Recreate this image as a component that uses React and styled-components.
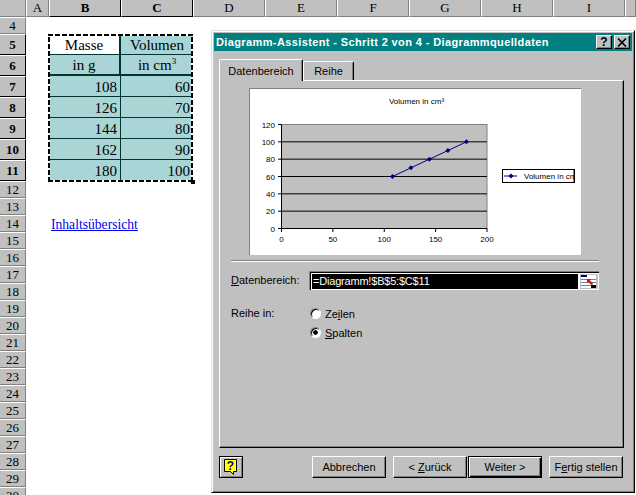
import React from 'react';
import styled, { createGlobalStyle } from 'styled-components';

const GlobalStyle = createGlobalStyle`
  html, body {
    margin: 0;
    padding: 0;
    background: #fff;
  }
  #root {
    width: 636px;
    height: 495px;
    overflow: hidden;
  }
`;

const Desktop = styled.div`
  position: relative;
  width: 636px;
  height: 495px;
  overflow: hidden;
  background: #fff;
`;

/* ---------- spreadsheet ---------- */

const Sheet = styled.div`
  display: grid;
  grid-template-columns: 26px 23px 72px 72px 72px 72px 72px 72px 72px 72px 11px;
  grid-template-rows: 17px 17px repeat(7, 21px) repeat(19, 17px);
  font-family: "Liberation Serif", "Times New Roman", serif;
  color: #000;
`;

const Corner = styled.div`
  grid-column: 1;
  grid-row: 1;
  background: #c0c0c0;
  border-right: 1px solid #808080;
  border-bottom: 1px solid #808080;
`;

const ColHeader = styled.div`
  grid-row: 1;
  grid-column: ${(p) => p.$col};
  display: flex;
  align-items: center;
  justify-content: center;
  box-sizing: border-box;
  background: #c0c0c0;
  font-size: 13px;
  font-weight: ${(p) => (p.$active ? 700 : 400)};
  border-left: 1px solid #fff;
  border-right: 1px solid ${(p) => (p.$active ? '#000' : '#808080')};
  border-bottom: 1px solid ${(p) => (p.$active ? '#000' : '#808080')};
`;

const RowHeader = styled.div`
  grid-column: 1;
  grid-row: ${(p) => p.$row};
  display: flex;
  align-items: center;
  justify-content: center;
  box-sizing: border-box;
  background: #c0c0c0;
  font-size: 13px;
  font-weight: ${(p) => (p.$active ? 700 : 400)};
  border-top: 1px solid #fff;
  border-right: 1px solid ${(p) => (p.$active ? '#000' : '#808080')};
  border-bottom: 1px solid ${(p) => (p.$active ? '#000' : '#808080')};
`;

const Cell = styled.div`
  grid-column: ${(p) => p.$col};
  grid-row: ${(p) => p.$row};
  display: flex;
  align-items: center;
  justify-content: ${(p) => (p.$center ? 'center' : 'flex-end')};
  box-sizing: border-box;
  padding: 2px ${(p) => (p.$center ? 0 : 3)}px 0 0;
  font-size: 15px;
  background-color: ${(p) => (p.$plain ? '#fff' : '#a8d4d4')};
  background-image: ${(p) =>
    p.$plain
      ? 'none'
      : 'conic-gradient(#a3d0d0 25%, #b0dada 0 50%, #a3d0d0 0 75%, #b0dada 0)'};
  background-size: 2px 2px;
  border-bottom: ${(p) => (p.$thick ? 2 : 1)}px solid #003333;
  border-right: ${(p) => (p.$col === 3 ? (p.$headRow ? 2 : 1) : 0)}px solid #003333;
`;

const Marquee = styled.div`
  grid-column: 3 / 5;
  grid-row: 3 / 10;
  position: relative;
  margin: 0 0 -1px -1px;
  pointer-events: none;
  background:
    repeating-linear-gradient(90deg, #000 0 5px, #fff 5px 7px) top / 100% 2px no-repeat,
    repeating-linear-gradient(90deg, #000 0 5px, #fff 5px 7px) bottom / 100% 2px no-repeat,
    repeating-linear-gradient(0deg, #000 0 5px, #fff 5px 7px) left / 2px 100% no-repeat,
    repeating-linear-gradient(0deg, #000 0 5px, #fff 5px 7px) right / 2px 100% no-repeat;
`;

const FillHandle = styled.span`
  position: absolute;
  right: -2px;
  bottom: -2px;
  width: 4px;
  height: 4px;
  background: #000;
`;

const SheetLink = styled.a`
  grid-column: 3 / 5;
  grid-row: 12;
  padding-left: 2px;
  font-size: 13.6px;
  line-height: 19px;
  white-space: nowrap;
  color: #0000ee;
  text-decoration: underline;
`;

/* ---------- dialog ---------- */

const Dialog = styled.div`
  position: absolute;
  left: 211px;
  top: 30px;
  width: 424px;
  height: 463px;
  box-sizing: border-box;
  padding: 1px;
  background: #c0c0c0;
  border-top: 1px solid #dfdfdf;
  border-left: 1px solid #dfdfdf;
  border-right: 1px solid #000;
  border-bottom: 1px solid #000;
  box-shadow: inset 1px 1px 0 #fff, inset -1px -1px 0 #808080;
  font-family: "Liberation Sans", Arial, sans-serif;
  font-size: 11px;
  color: #000;
`;

const TitleBar = styled.div`
  display: flex;
  align-items: center;
  height: 18px;
  margin: 1px 1px 0 1px;
  padding-left: 2px;
  background: #008080;
  color: #fff;
  font-size: 11px;
  font-weight: 700;
  letter-spacing: 0.38px;
`;

const TitleText = styled.span`
  flex: 1;
  white-space: nowrap;
`;

const CaptionButton = styled.button`
  width: 16px;
  height: 14px;
  margin-right: 2px;
  padding: 0;
  display: flex;
  align-items: center;
  justify-content: center;
  background: #c0c0c0;
  border: 1px solid;
  border-color: #fff #000 #000 #fff;
  box-shadow: inset -1px -1px 0 #808080;
  font-family: "Liberation Sans", Arial, sans-serif;
  font-size: 12px;
  font-weight: 700;
  color: #000;
`;

const Body = styled.div`
  padding: 8px 0 0 6px;
`;

const TabRow = styled.div`
  display: flex;
  align-items: flex-end;
  height: 21px;
`;

const Tab = styled.div`
  position: relative;
  z-index: ${(p) => (p.$active ? 1 : 0)};
  box-sizing: border-box;
  display: flex;
  align-items: center;
  justify-content: center;
  width: ${(p) => p.$width}px;
  height: ${(p) => (p.$active ? 22 : 19)}px;
  margin-bottom: ${(p) => (p.$active ? -1 : 0)}px;
  background: #c0c0c0;
  border-top: 1px solid #fff;
  border-left: 1px solid #fff;
  border-right: 1px solid #000;
  border-radius: 2px 2px 0 0;
  box-shadow: inset -1px 0 0 #808080;
`;

const Panel = styled.div`
  box-sizing: border-box;
  width: 405px;
  height: 368px;
  padding: 7px 0 0 11px;
  background: #c0c0c0;
  border-top: 1px solid #fff;
  border-left: 1px solid #fff;
  border-right: 1px solid #000;
  border-bottom: 1px solid #000;
  box-shadow: inset -1px -1px 0 #808080;
`;

const ChartFrame = styled.div`
  box-sizing: border-box;
  width: 332px;
  height: 167px;
  margin-left: 18px;
  background: #fff;
  border-top: 1px solid #808080;
  border-left: 1px solid #808080;
`;

const Separator = styled.div`
  width: 368px;
  height: 1px;
  margin-top: 5px;
  background: #808080;
  border-bottom: 1px solid #fff;
`;

const RangeRow = styled.div`
  display: grid;
  grid-template-columns: 78px 290px;
  align-items: center;
  margin-top: 9px;
`;

const RangeField = styled.div`
  box-sizing: border-box;
  display: flex;
  align-items: center;
  height: 19px;
  padding: 2px 1px 2px 2px;
  background: #fff;
  border-top: 1px solid #808080;
  border-left: 1px solid #808080;
  box-shadow: inset 1px 1px 0 #000;
`;

const RangeValue = styled.div`
  flex: 1;
  height: 15px;
  padding-left: 1px;
  background: #000;
  color: #fff;
  font-size: 11px;
  line-height: 15px;
  letter-spacing: -0.2px;
`;

const RangePicker = styled.div`
  width: 18px;
  height: 15px;
  margin-left: 2px;
  background: #c0c0c0;
  display: flex;
`;

const OrientationRow = styled.div`
  display: grid;
  grid-template-columns: 78px auto;
  margin-top: 14px;
`;

const FieldLabel = styled.span`
  line-height: 19px;
`;

const RadioList = styled.div`
  display: flex;
  flex-direction: column;
`;

const RadioRow = styled.label`
  display: flex;
  align-items: center;
  gap: 4px;
  height: 19px;
  margin-left: 1px;
`;

const RadioDot = styled.span`
  box-sizing: border-box;
  width: 11px;
  height: 11px;
  border-radius: 50%;
  background: ${(p) =>
    p.$checked ? 'radial-gradient(circle, #000 0 2px, #fff 2.5px)' : '#fff'};
  border: 1px solid #fff;
  border-top-color: #808080;
  border-left-color: #808080;
  box-shadow: inset 1px 1px 0 #000;
`;

const Footer = styled.div`
  display: flex;
  align-items: center;
  width: 405px;
  height: 22px;
  margin-top: 8px;
`;

const HelpButton = styled.div`
  box-sizing: border-box;
  display: flex;
  align-items: center;
  justify-content: center;
  width: 24px;
  height: 22px;
  margin-right: 69px;
  background: #c0c0c0;
  border: 1px solid #000;
  box-shadow: inset 1px 1px 0 #fff, inset -1px -1px 0 #808080;
`;

const WizardButton = styled.button`
  box-sizing: border-box;
  width: 74px;
  height: 22px;
  margin-left: ${(p) => p.$gap || 0}px;
  padding: 0;
  background: #c0c0c0;
  border: 1px solid;
  border-color: ${(p) => (p.$default ? '#000' : '#fff #000 #000 #fff')};
  box-shadow: ${(p) =>
    p.$default
      ? 'inset 1px 1px 0 #fff, inset -1px -1px 0 #000, inset -2px -2px 0 #808080'
      : 'inset -1px -1px 0 #808080'};
  font-family: "Liberation Sans", Arial, sans-serif;
  font-size: 11px;
  color: #000;
`;

/* ---------- drawings ---------- */

const chartText = {
  fontFamily: '"Liberation Sans", Arial, sans-serif',
  fontSize: 8,
  fill: '#000',
};

const points = [
  [108, 60],
  [126, 70],
  [144, 80],
  [162, 90],
  [180, 100],
];
const plotX = (v) => 32.5 + (v / 200) * 205.5;
const plotY = (v) => 140.5 - (v / 120) * 104;

function LineChart() {
  const path = points.map(([x, y]) => `${plotX(x)},${plotY(y)}`).join(' ');
  return (
    <svg width="331" height="166" viewBox="1 1 331 166" style={{ display: 'block' }}>
      <text x="167.5" y="16" textAnchor="middle" style={chartText}>
        Volumen in cm³
      </text>
      <rect x="32.5" y="36.5" width="205.5" height="104" fill="#c0c0c0" stroke="#808080" />
      {[20, 40, 60, 80, 100].map((v) => (
        <line key={v} x1="32.5" x2="238" y1={plotY(v)} y2={plotY(v)} stroke="#000" />
      ))}
      <line x1="32.5" x2="32.5" y1="36.5" y2="140.5" stroke="#000" />
      <line x1="32.5" x2="238" y1="140.5" y2="140.5" stroke="#000" />
      {[0, 20, 40, 60, 80, 100, 120].map((v) => (
        <g key={v}>
          <line x1="29" x2="32.5" y1={plotY(v)} y2={plotY(v)} stroke="#000" />
          <text x="26" y={plotY(v) + 3} textAnchor="end" style={chartText}>
            {v}
          </text>
        </g>
      ))}
      {[0, 50, 100, 150, 200].map((v) => (
        <g key={v}>
          <line x1={plotX(v)} x2={plotX(v)} y1="140.5" y2="144" stroke="#000" />
          <text x={plotX(v)} y="154" textAnchor="middle" style={chartText}>
            {v}
          </text>
        </g>
      ))}
      <polyline points={path} fill="none" stroke="#000080" />
      {points.map(([x, y]) => (
        <path
          key={x}
          d={`M${plotX(x)} ${plotY(y) - 2.5}l2.5 2.5l-2.5 2.5l-2.5 -2.5z`}
          fill="#000080"
        />
      ))}
      <svg x="253" y="81" width="73" height="14" viewBox="0 0 73 14">
        <rect x="0.5" y="0.5" width="72" height="13" fill="#fff" stroke="#000" />
        <line x1="2" x2="15" y1="7" y2="7" stroke="#000080" />
        <path d="M9 4.5l2.5 2.5l-2.5 2.5l-2.5 -2.5z" fill="#000080" />
        <text x="22" y="10" style={chartText}>
          Volumen in cm³
        </text>
        <rect x="71.5" y="0.5" width="1" height="13" fill="#000" />
      </svg>
    </svg>
  );
}

function RangeIcon() {
  return (
    <svg width="18" height="15" viewBox="0 0 18 15">
      <rect x="1" y="1" width="15" height="13" fill="#fff" />
      <rect x="1" y="1" width="6" height="2" fill="#000080" />
      <path d="M1 5.5h15M1 8.5h15M1 11.5h15" stroke="#808080" />
      <rect x="11" y="11" width="5" height="3" fill="#000" />
      <path d="M7 5h4l-1.2 1.2 3.4 3.4-1.6 1.6-3.4-3.4L7 9z" fill="#f00" />
    </svg>
  );
}

function HelpIcon() {
  return (
    <svg width="16" height="18" viewBox="0 0 16 18">
      <defs>
        <pattern id="helpDots" width="2" height="2" patternUnits="userSpaceOnUse">
          <rect width="2" height="2" fill="#ffff00" />
          <rect width="1" height="1" fill="#fff" />
        </pattern>
      </defs>
      <path
        d="M1.5 1.5h12v12h-3v3l-3-3h-6z"
        fill="url(#helpDots)"
        stroke="#000"
      />
      <text
        x="7.5"
        y="12"
        textAnchor="middle"
        fontFamily="Liberation Sans, Arial, sans-serif"
        fontSize="12"
        fontWeight="700"
        fill="#000080"
      >
        ?
      </text>
    </svg>
  );
}

function CloseIcon() {
  return (
    <svg width="10" height="9" viewBox="0 0 10 9">
      <path d="M1 0.5l8 8M9 0.5l-8 8" stroke="#000" strokeWidth="1.6" fill="none" />
    </svg>
  );
}

/* ---------- page ---------- */

const columns = ['A', 'B', 'C', 'D', 'E', 'F', 'G', 'H', 'I', ''];
const rows = Array.from({ length: 27 }, (_, i) => i + 4);
const values = [
  [108, 60],
  [126, 70],
  [144, 80],
  [162, 90],
  [180, 100],
];

export default function App() {
  return (
    <Desktop>
      <GlobalStyle />
      <Sheet>
        <Corner />
        {columns.map((name, i) => (
          <ColHeader key={i} $col={i + 2} $active={name === 'B' || name === 'C'}>
            {name}
          </ColHeader>
        ))}
        {rows.map((n) => (
          <RowHeader key={n} $row={n - 2} $active={n >= 5 && n <= 11}>
            {n}
          </RowHeader>
        ))}

        <Cell $col={3} $row={3} $center $plain $headRow>Masse</Cell>
        <Cell $col={4} $row={3} $center $headRow>Volumen</Cell>
        <Cell $col={3} $row={4} $center $thick $headRow>in g</Cell>
        <Cell $col={4} $row={4} $center $thick $headRow>
          <span>in cm<sup style={{ fontSize: 9, lineHeight: 0 }}>3</sup></span>
        </Cell>
        {values.map(([mass, volume], i) => (
          <React.Fragment key={mass}>
            <Cell $col={3} $row={i + 5}>{mass}</Cell>
            <Cell $col={4} $row={i + 5}>{volume}</Cell>
          </React.Fragment>
        ))}
        <Marquee>
          <FillHandle />
        </Marquee>
        <SheetLink href="#">Inhaltsübersicht</SheetLink>
      </Sheet>

      <Dialog>
        <TitleBar>
          <TitleText>Diagramm-Assistent - Schritt 2 von 4 - Diagrammquelldaten</TitleText>
          <CaptionButton>?</CaptionButton>
          <CaptionButton><CloseIcon /></CaptionButton>
        </TitleBar>
        <Body>
          <TabRow>
            <Tab $active $width={84}>Datenbereich</Tab>
            <Tab $width={51}>Reihe</Tab>
          </TabRow>
          <Panel>
            <ChartFrame>
              <LineChart />
            </ChartFrame>
            <Separator />
            <RangeRow>
              <FieldLabel><u>D</u>atenbereich:</FieldLabel>
              <RangeField>
                <RangeValue>=Diagramm!$B$5:$C$11</RangeValue>
                <RangePicker>
                  <RangeIcon />
                </RangePicker>
              </RangeField>
            </RangeRow>
            <OrientationRow>
              <FieldLabel>Reihe in:</FieldLabel>
              <RadioList>
                <RadioRow><RadioDot /><span>Ze<u>i</u>len</span></RadioRow>
                <RadioRow><RadioDot $checked /><span><u>S</u>palten</span></RadioRow>
              </RadioList>
            </OrientationRow>
          </Panel>
          <Footer>
            <HelpButton>
              <HelpIcon />
            </HelpButton>
            <WizardButton>Abbrechen</WizardButton>
            <WizardButton $gap={7}>&lt; <u>Z</u>urück</WizardButton>
            <WizardButton $gap={1} $default>Weiter &gt;</WizardButton>
            <WizardButton $gap={7}>F<u>e</u>rtig stellen</WizardButton>
          </Footer>
        </Body>
      </Dialog>
    </Desktop>
  );
}
